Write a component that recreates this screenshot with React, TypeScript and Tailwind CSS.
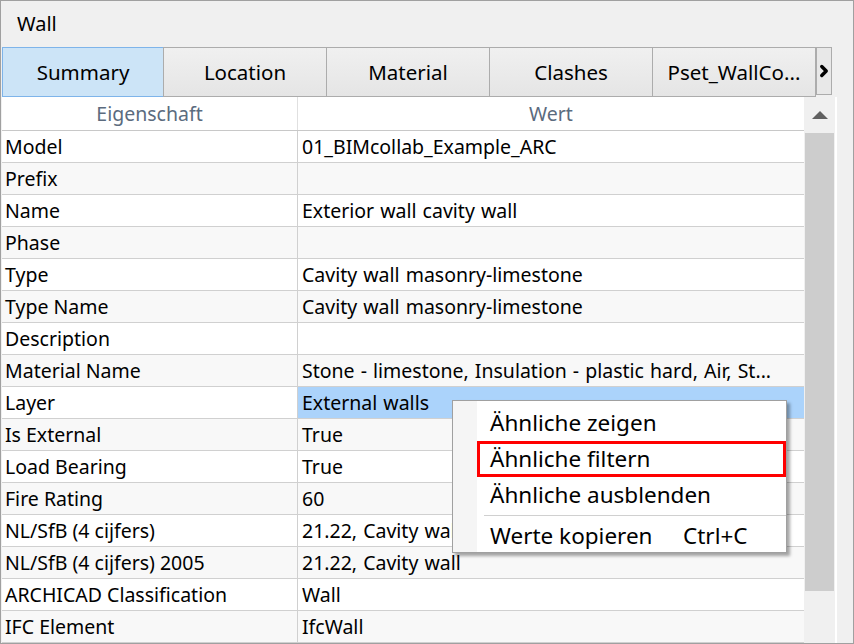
import { ChevronRight } from "lucide-react";

const rows: [string, string][] = [
  ["Model", "01_BIMcollab_Example_ARC"],
  ["Prefix", ""],
  ["Name", "Exterior wall cavity wall"],
  ["Phase", ""],
  ["Type", "Cavity wall masonry-limestone"],
  ["Type Name", "Cavity wall masonry-limestone"],
  ["Description", ""],
  ["Material Name", "Stone - limestone, Insulation - plastic hard, Air, St..."],
  ["Layer", "External walls"],
  ["Is External", "True"],
  ["Load Bearing", "True"],
  ["Fire Rating", "60"],
  ["NL/SfB (4 cijfers)", "21.22, Cavity wall"],
  ["NL/SfB (4 cijfers) 2005", "21.22, Cavity wall"],
  ["ARCHICAD Classification", "Wall"],
  ["IFC Element", "IfcWall"],
];

const tabs = [
  { label: "Summary", w: "w-[162px]", active: true },
  { label: "Location", w: "w-[164px]", active: false },
  { label: "Material", w: "w-[164px]", active: false },
  { label: "Clashes", w: "w-[164px]", active: false },
  { label: "Pset_WallCo...", w: "w-[164px]", active: false },
];

const font = { fontFamily: '"Noto Sans", "Open Sans", sans-serif' };

export default function App() {
  return (
    <div
      className="relative flex h-[644px] w-[854px] flex-col overflow-hidden border border-[#a0a0a0] bg-[#f0f0f0] text-[19.5px] text-black"
      style={font}
    >
      {/* title */}
      <div className="flex h-[46px] shrink-0 items-center pl-[16px] text-[20px]">Wall</div>

      {/* tabs */}
      <div className="flex h-[50px] shrink-0 pl-px">
        {tabs.map((t) => (
          <div
            key={t.label}
            className={
              t.active
                ? `${t.w} -mr-px flex items-center justify-center border border-[#7eb4ea] bg-[#cce4f7] text-[20.5px]`
                : `${t.w} -mr-px flex items-center justify-center border border-[#acacac] bg-gradient-to-b from-[#f0f0f0] to-[#e5e5e5] text-[20.5px]`
            }
          >
            {t.label}
          </div>
        ))}
        <div className="ml-px flex h-[48px] w-[16px] items-center justify-center border border-[#acacac] bg-[#e8e8e8]">
          <ChevronRight className="size-[18px] shrink-0" strokeWidth={4.5} />
        </div>
      </div>

      {/* body */}
      <div className="flex min-h-0 flex-1 pl-px">
        <div className="w-[802px] overflow-hidden bg-white">
          <div className="flex h-[34px] border-b border-[#c8c8c8] text-[#5b6b7e]">
            <div className="flex w-[296px] items-center justify-center border-r border-[#e0e0e0]">Eigenschaft</div>
            <div className="flex flex-1 items-center justify-center">Wert</div>
          </div>
          {rows.map(([k, v], i) => (
            <div
              key={k}
              className={`flex h-[32px] border-b border-[#d0d0d0] ${i % 2 === 1 ? "bg-[#f8f8f8]" : "bg-white"}`}
            >
              <div className="flex w-[296px] items-center overflow-hidden whitespace-nowrap border-r border-[#d0d0d0] pl-[3px]">
                {k}
              </div>
              <div
                className={`flex flex-1 items-center overflow-hidden whitespace-nowrap pl-[4px] [word-spacing:1px] ${
                  k === "Layer" ? "bg-[#abd3fb]" : ""
                }`}
              >
                {v}
              </div>
            </div>
          ))}
        </div>

        {/* scrollbar */}
        <div className="flex w-[31px] flex-col bg-[#f0f0f0]">
          <div className="flex h-[36px] items-center justify-center">
            <div className="h-0 w-0 border-x-[8px] border-b-[8px] border-x-transparent border-b-[#606060]" />
          </div>
          <div className="mx-[1px] h-[458px] bg-[#cdcdcd]" />
        </div>
        <div className="w-[2px] bg-white" />
        <div className="flex-1 bg-[#f0f0f0]" />
      </div>

      {/* context menu */}
      <div className="absolute left-[451px] top-[399px] flex h-[153px] w-[335px] border border-[#a0a0a0] bg-white text-[22.5px] shadow-[3px_3px_3px_rgba(0,0,0,0.35)]">
        <div className="w-[24px] bg-[#f5f5f5]" />
        <div className="flex flex-1 flex-col pt-[4px]">
          <div className="flex h-[36px] shrink-0 items-center pl-[13px]">Ähnliche zeigen</div>
          <div className="flex h-[36px] shrink-0 items-center border-[3px] border-[#ff0000] pl-[10px]">Ähnliche filtern</div>
          <div className="flex h-[36px] shrink-0 items-center pl-[13px]">Ähnliche ausblenden</div>
          <div className="mb-[3px] ml-[7px] mt-[2px] h-px shrink-0 bg-[#d0d0d0]" />
          <div className="flex h-[34px] shrink-0 items-center pl-[13px]">
            <span className="w-[193px]">Werte kopieren</span>
            <span>Ctrl+C</span>
          </div>
        </div>
      </div>
    </div>
  );
}
